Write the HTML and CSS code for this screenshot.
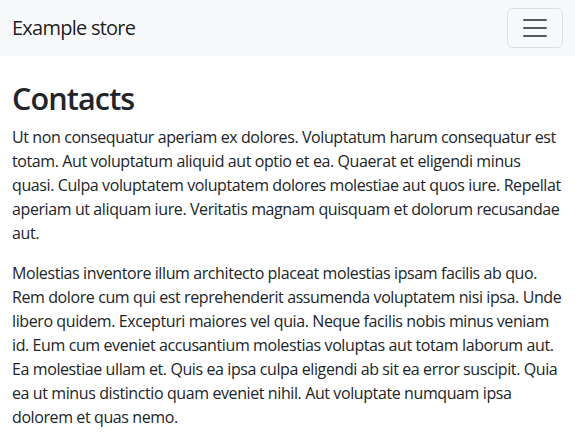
FILE: index.html
```html
<!DOCTYPE html>
<html lang="en">
<head>
<meta charset="utf-8">
<title>Contacts</title>
<link rel="stylesheet" href="styles.css">
</head>
<body>
<nav class="navbar">
  <div class="navbar-inner">
    <a class="brand" href="#">Example store</a>
    <button class="toggler" type="button" aria-label="Toggle navigation">
      <svg class="toggler-icon" viewBox="0 0 30 30" width="30" height="30"><path stroke="rgba(33,37,41,0.75)" stroke-linecap="round" stroke-miterlimit="10" stroke-width="2" d="M4 7h22M4 15h22M4 23h22"/></svg>
    </button>
  </div>
</nav>
<main class="container">
  <h1 class="title">Contacts</h1>
  <p>Ut non consequatur aperiam ex dolores. Voluptatum harum consequatur est totam. Aut voluptatum aliquid aut optio et ea. Quaerat et eligendi minus quasi. Culpa voluptatem voluptatem dolores molestiae aut quos iure. Repellat aperiam ut aliquam iure. Veritatis magnam quisquam et dolorum recusandae aut.</p>
  <p>Molestias inventore illum architecto placeat molestias ipsam facilis ab quo. Rem dolore cum qui est reprehenderit assumenda voluptatem nisi ipsa. Unde libero quidem. Excepturi maiores vel quia. Neque facilis nobis minus veniam id. Eum cum eveniet accusantium molestias voluptas aut totam laborum aut. Ea molestiae ullam et. Quis ea ipsa culpa eligendi ab sit ea error suscipit. Quia ea ut minus distinctio quam eveniet nihil. Aut voluptate numquam ipsa dolorem et quas nemo.</p>
</main>
</body>
</html>
```
FILE: styles.css
```css
* { box-sizing: border-box; }
html, body { margin: 0; padding: 0; }
body {
  font-family: "Open Sans", "Noto Sans", sans-serif;
  font-size: 16px;
  line-height: 1.5;
  color: #212529;
  background: #fff;
  letter-spacing: -0.4px;
}
.navbar {
  background: #f8f9fa;
  padding: 8px 0;
}
.navbar-inner {
  display: flex;
  align-items: center;
  justify-content: space-between;
  padding: 0 12px;
}
.brand {
  font-size: 20px;
  line-height: 30px;
  padding: 5px 0;
  color: rgba(0,0,0,0.9);
  text-decoration: none;
  letter-spacing: -0.75px;
}
.toggler {
  display: flex;
  align-items: center;
  justify-content: center;
  padding: 4px 12px;
  background: transparent;
  border: 1px solid rgba(0,0,0,0.1);
  border-radius: 6px;
  height: 40px;
  width: 56px;
}
.toggler-icon { display: block; }
.container {
  padding: 24px 12px 0;
}
.title {
  margin: 0 0 8px;
  font-size: 30.6px;
  font-weight: 600;
  line-height: 1.2;
  letter-spacing: -0.9px;
}
p { margin: 0 0 16px; }
```
